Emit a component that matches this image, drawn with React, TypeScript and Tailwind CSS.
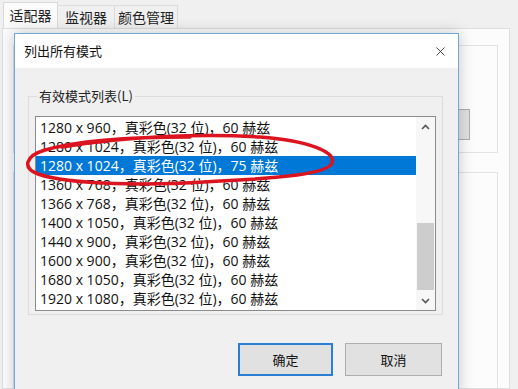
import { X } from 'lucide-react'

const MODES = [
    '1280 x 960，真彩色(32 位)，60 赫兹',
    '1280 x 1024，真彩色(32 位)，60 赫兹',
    '1280 x 1024，真彩色(32 位)，75 赫兹',
    '1360 x 768，真彩色(32 位)，60 赫兹',
    '1366 x 768，真彩色(32 位)，60 赫兹',
    '1400 x 1050，真彩色(32 位)，60 赫兹',
    '1440 x 900，真彩色(32 位)，60 赫兹',
    '1600 x 900，真彩色(32 位)，60 赫兹',
    '1680 x 1050，真彩色(32 位)，60 赫兹',
    '1920 x 1080，真彩色(32 位)，60 赫兹',
]
const SELECTED = 2

function Tabs() {
    return (
        <div className="flex items-end h-[28px] pl-[3px] text-[14px] text-[#222]">
            <div className="h-[26px] w-[55px] flex items-center justify-center bg-[#fbfbfb] border border-b-0 border-[#d9d9d9]">适配器</div>
            <div className="h-[23px] w-[57px] flex items-center justify-center border-t border-r border-[#dcdcdc]">监视器</div>
            <div className="h-[23px] w-[63px] flex items-center justify-center border-t border-r border-[#dcdcdc]">颜色管理</div>
        </div>
    )
}

// property sheet panel behind the dialog
function Panel() {
    return (
        <div className="ml-[2px] w-[508px] h-[361px] bg-[#fcfcfc] border border-[#dedede] pt-[16px] pl-[10px]">
            <div className="w-[485px] h-[108px] border border-[#e3e3e3] flex justify-end pt-[63px] pr-[27px]">
                <div className="w-[80px] h-[31px] bg-[#e1e1e1] border border-[#adadad]" />
            </div>
            <div className="mt-[19px] w-[485px] h-[220px] border border-[#e3e3e3]" />
        </div>
    )
}

function Chevron({ up }: { up?: boolean }) {
    return (
        <svg width="9" height="6" viewBox="0 0 9 6">
            <path
                d={up ? 'M1 5 L4.5 1.5 L8 5' : 'M1 1 L4.5 4.5 L8 1'}
                fill="none"
                stroke="#555"
                strokeWidth="1.6"
            />
        </svg>
    )
}

function ModeList() {
    return (
        <div className="flex w-[401px] h-[195px] border border-[#8c8c8c] bg-white">
            <div className="flex-1 pt-[1px]">
                {MODES.map((m, i) => (
                    <div
                        key={i}
                        className={
                            "h-[19px] leading-[19px] pl-[4px] text-[14px] whitespace-nowrap font-['Open_Sans','Noto_Sans_CJK_SC',sans-serif] " +
                            (i === SELECTED ? 'bg-[#0078d7] text-white' : 'text-[#111]')
                        }
                    >
                        {m}
                    </div>
                ))}
            </div>
            <div className="w-[19px] flex flex-col bg-[#f7f7f7]">
                <div className="h-[19px] flex items-center justify-center"><Chevron up /></div>
                <div className="flex-1 flex flex-col justify-end px-[1px] pb-[1px]">
                    <div className="h-[67px] bg-[#cdcdcd]" />
                </div>
                <div className="h-[19px] flex items-center justify-center"><Chevron /></div>
            </div>
        </div>
    )
}

function Dialog() {
    return (
        <div className="absolute left-[14px] top-[33px] w-[445px] h-[362px] border border-[#6ea8dc] bg-[#f0f0f0] shadow-[0_0_14px_rgba(0,0,0,0.22)]">
            <div className="h-[34px] bg-white flex items-center justify-between pl-[9px] pr-[10px] text-[13px] text-[#111]">
                <span>列出所有模式</span>
                <X size={15} strokeWidth={1.4} color="#333" />
            </div>
            <fieldset className="ml-[13px] mt-[19px] w-[415px] border border-[#dcdcdc] pl-[6px] pb-[3px]">
                <legend className="ml-[2px] px-[2px] text-[13px] leading-[18px] text-[#222]">有效模式列表(L)</legend>
                <div className="mt-[11px]">
                    <ModeList />
                </div>
            </fieldset>
            <div className="flex justify-end gap-[12px] mt-[28px] pr-[16px] text-[13px] text-[#111]">
                <button className="w-[95px] h-[33px] bg-[#e1e1e1] border-2 border-[#2a7fd4]">确定</button>
                <button className="w-[97px] h-[33px] bg-[#e1e1e1] border border-[#adadad]">取消</button>
            </div>
        </div>
    )
}

export default function App() {
    return (
        <div className="relative w-[518px] h-[389px] overflow-hidden bg-[#f0f0f0] font-['Noto_Sans_CJK_SC',sans-serif]">
            <Tabs />
            <Panel />
            <Dialog />
            {/* red hand-drawn annotation */}
            <svg className="absolute inset-0 pointer-events-none" width="518" height="389">
                <path
                    d="M62 147 C120 137 200 133 260 137 C310 141 336 152 332 163 C328 174 280 178 220 181 C150 186 70 185 38 174 C22 168 25 156 45 150 C80 140 140 137 190 137"
                    fill="none"
                    stroke="#dc1420"
                    strokeWidth="3.5"
                    strokeLinecap="round"
                />
            </svg>
        </div>
    )
}
